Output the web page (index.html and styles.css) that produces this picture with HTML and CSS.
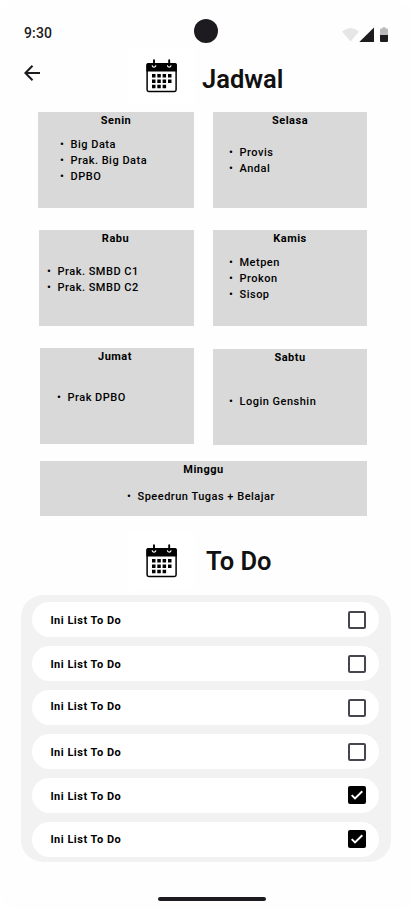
FILE: index.html
```html
<!DOCTYPE html>
<html lang="id">
<head>
<meta charset="utf-8">
<meta name="viewport" content="width=device-width, initial-scale=1">
<title>Jadwal</title>
<link rel="stylesheet" href="styles.css">
</head>
<body>
<svg width="0" height="0" class="defs" aria-hidden="true">
  <symbol id="calendar" viewBox="0 0 32 34">
    <rect x="1.1" y="5" width="29" height="27.4" rx="1.6" fill="#fff" stroke="#000" stroke-width="1.5"/>
    <path d="M.4 12.5V5.600Q.4 4 2 4H29.200Q30.800 4 30.800 5.600V12.500Z"/>
    <path d="M6.200 6.300a1.800 1.800 0 1 0 3.600 0M21.400 6.300a1.800 1.800 0 1 0 3.600 0" fill="none" stroke="#fff" stroke-width="1.100"/>
    <path d="M8 1.200V6M23.200 1.200V6" stroke="#000" stroke-width="1.900" stroke-linecap="round"/>
    <path d="M6 15h3.500v3.500H6zM11.300 15h3.500v3.500h-3.500zM16.600 15h3.500v3.500h-3.500zM22 15h3.500v3.500H22zM6 20.400h3.500v3.500H6zM11.300 20.400h3.500v3.500h-3.500zM16.600 20.400h3.500v3.500h-3.500zM22 20.400h3.500v3.500H22zM6 25.700h3.500v3.500H6zM11.300 25.700h3.500v3.500h-3.500zM16.600 25.700h3.500v3.500h-3.500z"/>
  </symbol>
  <symbol id="check" viewBox="0 0 18 18">
    <path d="M3.700 9.100L7 12.400L14.300 5.200" fill="none" stroke="#fff" stroke-width="2"/>
  </symbol>
</svg>
<main class="screen">
  <header class="status">
    <span class="time">9:30</span>
    <span class="camera"></span>
    <svg class="indicators" width="48" height="18" viewBox="0 0 48 18">
      <path d="M0 4.500Q8.500-2.500 17 4.500L8.500 14.500Z" fill="#e6e6e6"/>
      <path d="M17.300 15L32 .5V15Z" fill="#1d1b20"/>
      <path d="M38 8V2.500Q38 1.500 39 1.500H40.500V.3H43.500V1.500H45Q46 1.500 46 2.500V8Z" fill="#b9b9ba"/>
      <path d="M38 8H46V14Q46 15 45 15H39Q38 15 38 14Z" fill="#1d1b20"/>
    </svg>
  </header>
  <div class="heading">
    <svg class="back" width="16" height="16" viewBox="0 0 16 16"><path d="M16 8H1.500M8.500 .8L1.400 8L8.500 15.200" fill="none" stroke="#1d1b20" stroke-width="2"/></svg>
    <span class="tile"><svg width="32" height="34"><use href="#calendar"/></svg></span>
    <h1>Jadwal</h1>
  </div>
  <section class="days">
    <div class="column">
      <article class="day senin"><h2>Senin</h2><ul><li>Big Data</li><li>Prak. Big Data</li><li>DPBO</li></ul></article>
      <article class="day rabu"><h2>Rabu</h2><ul><li>Prak. SMBD C1</li><li>Prak. SMBD C2</li></ul></article>
      <article class="day jumat"><h2>Jumat</h2><ul><li>Prak DPBO</li></ul></article>
    </div>
    <div class="column right">
      <article class="day selasa"><h2>Selasa</h2><ul><li>Provis</li><li>Andal</li></ul></article>
      <article class="day kamis"><h2>Kamis</h2><ul><li>Metpen</li><li>Prokon</li><li>Sisop</li></ul></article>
      <article class="day sabtu"><h2>Sabtu</h2><ul><li>Login Genshin</li></ul></article>
    </div>
  </section>
  <article class="day minggu"><h2>Minggu</h2><ul><li>Speedrun Tugas + Belajar</li></ul></article>
  <div class="heading todo-heading">
    <span class="tile"><svg width="32" height="34"><use href="#calendar"/></svg></span>
    <h1>To Do</h1>
  </div>
  <section class="todos">
    <div class="todo"><span>Ini List To Do</span><i class="box"></i></div>
    <div class="todo"><span>Ini List To Do</span><i class="box"></i></div>
    <div class="todo raised"><span>Ini List To Do</span><i class="box"></i></div>
    <div class="todo"><span>Ini List To Do</span><i class="box"></i></div>
    <div class="todo done"><span>Ini List To Do</span><i class="box"><svg width="18" height="18"><use href="#check"/></svg></i></div>
    <div class="todo done last"><span>Ini List To Do</span><i class="box"><svg width="18" height="18"><use href="#check"/></svg></i></div>
  </section>
  <div class="home"></div>
</main>
</body>
</html>
```
FILE: styles.css
```css
* { box-sizing: border-box; }
body { margin: 0; background: #fff; font-family: Roboto, sans-serif; color: #000; }
.defs { position: absolute; }
svg { display: block; }
h1, h2, ul { margin: 0; padding: 0; }
.screen { width: 412px; height: 910px; background: #fefefe; border-radius: 18px; display: flex; flex-direction: column; overflow: hidden; }
.status { height: 47px; flex: none; display: grid; grid-template-columns: 1fr 24px 1fr; padding: 19px 22px 0 24px; }
.time { font-size: 14px; line-height: 20px; font-weight: 500; letter-spacing: .14px; color: #1d1b20; padding-top: 4px; }
.camera { width: 24px; height: 24px; border-radius: 50%; background: #1d1b20; margin-left: -1px; }
.indicators { justify-self: end; margin: 8px 0 0; }
.heading { display: flex; height: 58px; flex: none; }
.back { margin: 18px 89px 0 24px; }
.tile { width: 65px; height: 58px; background: #fff; padding: 12px 0 0 17px; }
h1 { font-size: 25.500px; line-height: 32px; font-weight: 600; color: #111; margin: 16px 0 0 8px; }
.days { display: flex; gap: 19px; margin: 7px 45px 0 38px; }
.column { width: 156px; display: flex; flex-direction: column; gap: 22px; align-items: flex-end; }
.right { width: 154px; }
.day { width: 154px; height: 96px; background: #d9d9d9; font-size: 11px; line-height: 16px; letter-spacing: .5px; }
.day h2 { font-size: 11px; line-height: 16px; font-weight: 700; text-align: center; padding-top: 1px; }
.day ul { list-style: none; font-weight: 500; letter-spacing: .5px; padding: 8px 0 0 16px; }
.day li { display: flex; white-space: pre; }
.day li::before { content: "•"; width: 10.500px; flex: none; font-size: 11px; letter-spacing: 0; }
.senin { width: 156px; }
.senin ul { padding-left: 22px; }
.selasa ul { padding-top: 16px; }
.rabu { width: 155px; }
.rabu h2 { padding-right: 2px; }
.rabu ul { padding: 17px 0 0 8px; }
.jumat h2 { padding-right: 4px; }
.jumat ul { padding: 25px 0 0 17px; }
.sabtu { margin-top: 1px; }
.sabtu ul { padding-top: 28px; }
.minggu { width: 327px; height: 55px; flex: none; margin: 16px 0 0 40px; }
.minggu ul { padding: 11px 0 0 87px; }
.todo-heading { margin: 16px 0 0 129px; }
.todo-heading h1 { margin: 13px 0 0 12px; }
.todos { width: 370px; height: 267px; flex: none; margin: 5px 0 0 21px; padding: 7px 12px 0 11px; background: #f2f2f2; border-radius: 22px; display: flex; flex-direction: column; gap: 9px; }
.todo { height: 35px; border-radius: 18px; background: #fff; display: flex; justify-content: space-between; align-items: flex-start; padding: 9px 13px 0 18.400px; }
.todo span { font-size: 11px; line-height: 16px; font-weight: 700; letter-spacing: .5px; padding-top: 2px; }
.raised span { margin-top: -2px; }
.last span { margin-top: -1px; }
.box { width: 18px; height: 18px; border: 2px solid #49454f; border-radius: 2px; }
.done .box { border: 0; background: #000; margin-top: -1px; }
.home { width: 108px; height: 4px; border-radius: 2px; background: #1d1b20; margin: 35px 0 0 158px; }
```
